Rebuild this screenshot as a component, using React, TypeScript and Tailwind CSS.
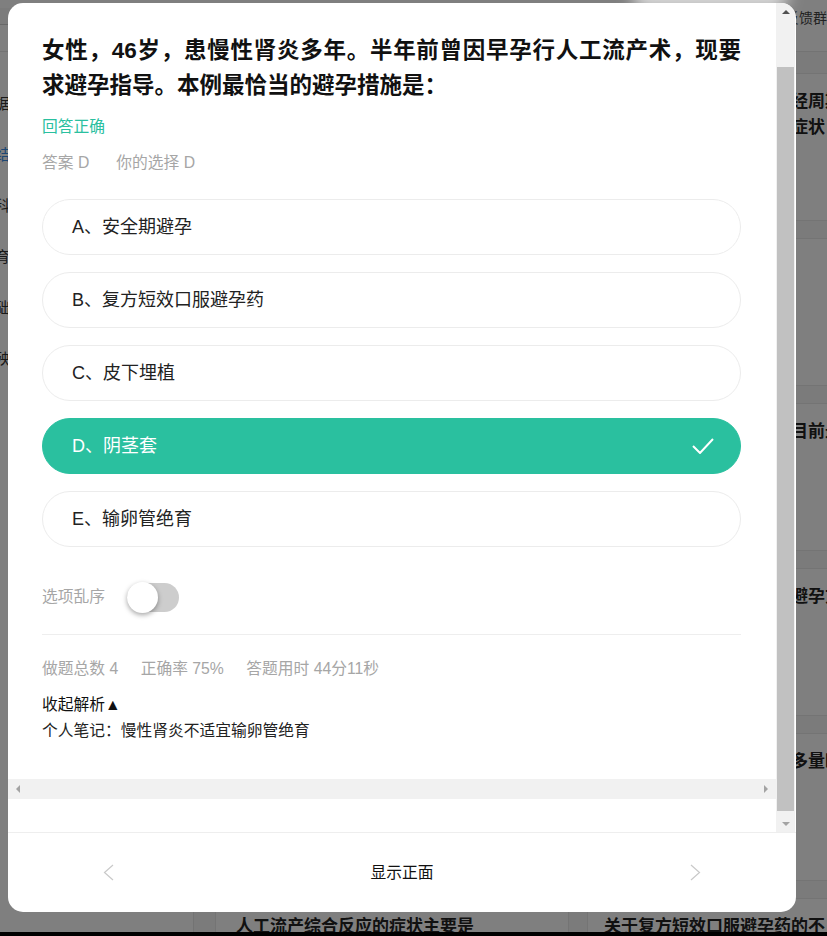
import React from 'react'

const options = [
  { key: 'A', text: '安全期避孕' },
  { key: 'B', text: '复方短效口服避孕药' },
  { key: 'C', text: '皮下埋植' },
  { key: 'D', text: '阴茎套' },
  { key: 'E', text: '输卵管绝育' },
]

const answer = 'D'

const leftCards = [
  '女性，28岁，产后42天复查，咨询避孕方法',
  '下列关于避孕原理的叙述，正确的是',
  '宫内节育器放置术后的注意事项',
  '关于紧急避孕的说法',
  '药物流产的适应证不包括',
  '人工流产综合反应的症状主要是',
]

const rightCards = [
  '下列哪一项不属于正常月经周期的表现，哪些属于围绝经期综合征症状',
  '关于输卵管结扎术',
  '宫内节育器的放置时间，目前最常用的是',
  '哺乳期妇女产后最适宜的避孕方法是',
  '人工流产术后阴道出血较多量时应',
  '关于复方短效口服避孕药的不良反应，错误的是',
]

const sideItems = [
  { t: '数据', on: false },
  { t: '总结', on: true },
  { t: '学科', on: false },
  { t: '教育', on: false },
  { t: '基础', on: false },
  { t: '病殃', on: false },
]

function Check() {
  return (
    <svg width="22" height="16" viewBox="0 0 22 16" fill="none">
      <polyline points="1,8 8,15 21,1" stroke="white" strokeWidth="2" strokeLinejoin="miter" />
    </svg>
  )
}

function Chevron({ dir }: { dir: 'left' | 'right' }) {
  return (
    <svg width="11" height="17" viewBox="0 0 11 17" fill="none">
      <polyline
        points={dir === 'left' ? '10,1 1.5,8.5 10,16' : '1,1 9.5,8.5 1,16'}
        stroke="#c9c9c9"
        strokeWidth="1.2"
      />
    </svg>
  )
}

function BgCard({ title, right }: { title: string; right?: boolean }) {
  return (
    <div className={`h-[148px] border border-[#e8e8e8] bg-white pt-[15px] ${right ? 'pl-[16px] pr-5' : 'px-5'}`}>
      <p className="text-[17px] font-bold leading-[26px] text-[#222]">{title}</p>
    </div>
  )
}

function Page() {
  return (
    <div className="flex h-[932px] flex-col bg-white">
      <header className="flex h-[52px] shrink-0 items-start border-b border-[#e6e6e6]">
        <div className="mt-[8px] h-[17px] w-[30px] border-b border-[#d0d0d0] bg-[#f6f6f6]" />
        <span className="ml-[737px] mt-[8px] whitespace-nowrap text-[14px] leading-[20px] text-[#444]">意见反馈群</span>
      </header>
      <div className="flex flex-1 overflow-hidden">
        <aside className="w-[194px] shrink-0 border-r border-[#e6e6e6] bg-white pt-[27px]">
          {sideItems.map((s) => (
            <div
              key={s.t}
              className={`flex h-[51px] w-[10px] items-center justify-end overflow-hidden whitespace-nowrap text-[15px] ${
                s.on ? 'text-[#3a8ee6]' : 'text-[#333]'
              }`}
            >
              {s.t}
            </div>
          ))}
        </aside>
        <main className="flex-1 bg-[#f7f7f7] pl-[21px] pt-[21px]">
          <div className="grid grid-cols-[354px_354px] gap-x-[18px] gap-y-[17px]">
            {leftCards.map((t, i) => (
              <React.Fragment key={i}>
                <BgCard title={t} />
                <BgCard title={rightCards[i]} right />
              </React.Fragment>
            ))}
          </div>
        </main>
      </div>
    </div>
  )
}

function Modal() {
  return (
    <div className="absolute left-[8px] top-[3px] flex h-[909px] w-[788px] flex-col overflow-hidden rounded-[15px] bg-white">
      <div className="flex h-[829px] shrink-0">
        <div className="flex w-[768px] flex-col">
          <div className="pl-[34px] pr-[35px] pt-[30px]">
            <h2 className="text-justify text-[22.5px] font-bold leading-[35px] text-[#111]">
              女性，46岁，患慢性肾炎多年。半年前曾因早孕行人工流产术，现要求避孕指导。本例最恰当的避孕措施是：
            </h2>
            <p className="mt-[12px] text-[15.75px] leading-[24px] text-[#2ac09f]">回答正确</p>
            <p className="mt-[12px] flex text-[15.75px] leading-[24px] text-[#a6a6a6]">
              <span className="mr-[27px]">答案 D</span>
              <span>你的选择 D</span>
            </p>
            <ul className="mt-[24px] flex flex-col gap-[17px]">
              {options.map((o) => {
                const sel = o.key === answer
                return (
                  <li
                    key={o.key}
                    className={`flex h-[56px] items-center justify-between rounded-full border pl-[29px] pr-[26px] text-[18px] ${
                      sel ? 'border-[#2ac09f] bg-[#2ac09f] text-white' : 'border-[#ececec] bg-white text-[#222]'
                    }`}
                  >
                    <span>
                      {o.key}、{o.text}
                    </span>
                    {sel && <Check />}
                  </li>
                )
              })}
            </ul>
            <div className="mt-[35px] flex h-[30px] items-center">
              <span className="text-[15.75px] text-[#a6a6a6]">选项乱序</span>
              <div className="ml-[22px] flex h-[29px] w-[52px] items-center rounded-full bg-[#cdcdcd]">
                <div className="h-[31px] w-[31px] rounded-full bg-white shadow-[0_2px_5px_rgba(0,0,0,0.35)]" />
              </div>
            </div>
            <div className="mt-[22px] h-px bg-[#eeeeee]" />
            <p className="mt-[22px] flex text-[15.75px] leading-[24px] text-[#a6a6a6]">
              <span className="mr-[22.5px]">做题总数 4</span>
              <span className="mr-[22.5px]">正确率 75%</span>
              <span>答题用时 44分11秒</span>
            </p>
            <p className="mt-[11px] text-[15.75px] leading-[26px] text-[#111]">收起解析▲</p>
            <p className="text-[15.75px] leading-[26px] text-[#222]">个人笔记：慢性肾炎不适宜输卵管绝育</p>
          </div>
          <div className="mt-[35px] flex h-[20px] items-center justify-between bg-[#f1f1f1] px-[8px]">
            <span className="h-0 w-0 border-y-[4px] border-r-[4px] border-y-transparent border-r-[#a3a3a3]" />
            <span className="h-0 w-0 border-y-[4px] border-l-[4px] border-y-transparent border-l-[#a3a3a3]" />
          </div>
        </div>
        <div className="flex w-[19px] flex-col bg-[#f1f1f1]">
          <div className="flex h-[17px] items-center justify-center">
            <span className="h-0 w-0 border-x-[4px] border-b-[4px] border-x-transparent border-b-[#505050]" />
          </div>
          <div className="flex-1">
            <div className="mx-[1px] mt-[47px] h-[744px] bg-[#c1c1c1]" />
          </div>
          <div className="flex h-[17px] items-center justify-center">
            <span className="h-0 w-0 border-x-[4px] border-t-[4px] border-x-transparent border-t-[#a3a3a3]" />
          </div>
        </div>
      </div>
      <div className="flex flex-1 items-center justify-between border-t border-[#eeeeee] px-[95px]">
        <Chevron dir="left" />
        <span className="text-[15.75px] text-[#111]">显示正面</span>
        <Chevron dir="right" />
      </div>
    </div>
  )
}

export default function App() {
  return (
    <div className="relative h-[936px] w-[827px] overflow-hidden bg-black font-['Liberation_Sans','Noto_Sans_CJK_SC',sans-serif]">
      <Page />
      <div className="absolute inset-x-0 top-0 h-[932px] bg-black/50" />
      <div className="absolute left-[640px] top-[-16px] h-[14px] w-[140px] rounded-full shadow-[0_4px_16px_8px_rgba(255,255,255,0.7)]" />
      <Modal />
    </div>
  )
}
